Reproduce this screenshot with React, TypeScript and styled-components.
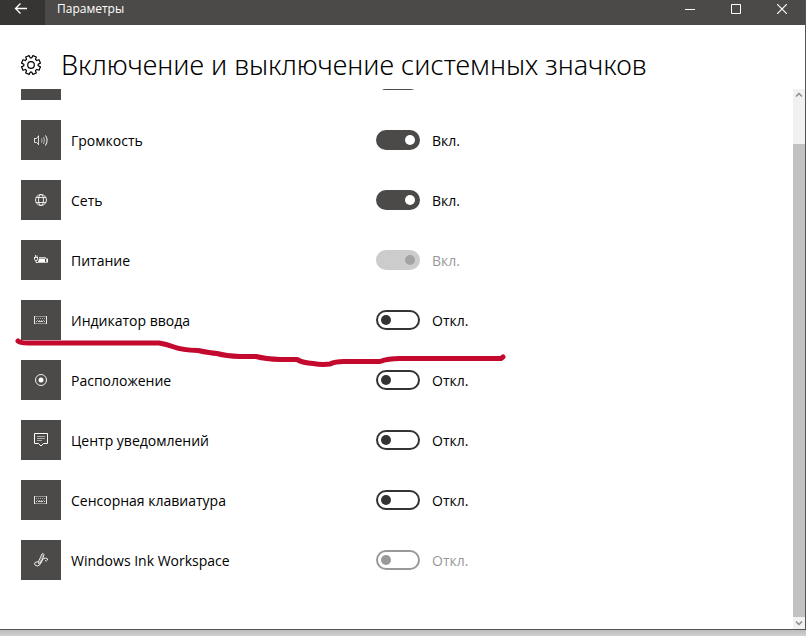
import React, { useState } from "react";
import styled, { createGlobalStyle } from "styled-components";

const GlobalStyle = createGlobalStyle`
  *, *::before, *::after { box-sizing: border-box; }
  body {
    margin: 0;
    background: #c9c9c9;
    color: #000;
    font-family: "Open Sans", "Noto Sans", sans-serif;
    font-size: 14px;
    line-height: 20px;
  }
  button { padding: 0; border: 0; background: none; color: inherit; font: inherit; }
`;

const Desktop = styled.div`
  height: 100vh;
  padding-bottom: 6px;
  background: linear-gradient(to top, #d0d0d0, #bcbcbc 6px);
`;

const Window = styled.div`
  position: relative;
  display: flex;
  flex-direction: column;
  height: 100%;
  border: solid #555453;
  border-width: 0 1px 1px 0;
  background: #fff;
`;

const TitleBar = styled.header`
  display: flex;
  flex: 0 0 25px;
  background: #4c4a48;
  color: #fff;
`;

const BackButton = styled.button`
  display: flex;
  justify-content: center;
  width: 45px;
  padding-right: 4px;
  background: #373533;
`;

const WindowTitle = styled.span`
  flex: 1;
  padding-left: 12px;
  font-size: 12px;
  line-height: 18px;
`;

const CaptionButton = styled.button`
  display: flex;
  justify-content: center;
  width: 46px;
  padding-top: 4px;
`;

const PageHeader = styled.div`
  display: flex;
  flex: 0 0 64px;
  align-items: center;
  gap: 19px;
  padding: 16px 20px 0;

  svg { flex: none; }
`;

const PageTitle = styled.h1`
  margin: 0;
  font-family: "Noto Sans", "Open Sans", sans-serif;
  font-size: 27px;
  font-weight: 300;
  line-height: 32px;
  white-space: nowrap;
`;

const Body = styled.main`
  display: flex;
  flex: 1;
  min-height: 0;
`;

const Viewport = styled.div`
  display: flex;
  flex: 1;
  flex-direction: column;
  justify-content: flex-end;
  min-width: 0;
  overflow: hidden;
  padding-bottom: 39px;
`;

const List = styled.ul`
  flex: none;
  margin: 0;
  padding: 0 0 0 21px;
  list-style: none;
`;

const Row = styled.li`
  display: grid;
  grid-template-columns: 40px 315px 44px 1fr;
  align-items: center;
  height: 60px;
`;

const Tile = styled.span`
  display: grid;
  place-items: center;
  width: 40px;
  height: 40px;
  background: #4c4a48;
  color: #fff;
`;

const Name = styled.label`
  padding: 2px 0 0 10px;
`;

const State = styled.span<{ $muted: boolean }>`
  padding: 2px 0 0 12px;
  color: ${(p) => (p.$muted ? "#999" : "#000")};
`;

const Toggle = styled.input`
  display: flex;
  grid-column: 3;
  align-items: center;
  appearance: none;
  width: 44px;
  height: 20px;
  margin: 0;
  padding: 0 3px;
  border: 2px solid #333;
  border-radius: 10px;

  &::before {
    content: "";
    width: 10px;
    height: 10px;
    border-radius: 50%;
    background: #333;
  }

  &:checked {
    justify-content: flex-end;
    border-color: #4c4a48;
    background: #4c4a48;
  }
  &:checked::before { background: #fff; }

  &:disabled { border-color: #999; }
  &:disabled::before { background: #999; }

  &:disabled:checked { border-color: #ccc; background: #ccc; }
  &:disabled:checked::before { background: #a3a3a3; }
`;

const ScrollBar = styled.div`
  display: flex;
  flex: 0 0 12px;
  flex-direction: column;
  background: #f1f1f1;
`;

const ScrollButton = styled.button`
  display: grid;
  place-items: center;
  width: 12px;
  height: 12px;
`;

const ScrollTrack = styled.div`
  display: flex;
  flex: 1;
  flex-direction: column;
  padding-top: 43px;
`;

const ScrollThumb = styled.div`
  flex: 1;
  background: #c2c2c2;
`;

const InkStroke = styled.svg`
  position: absolute;
  top: 335px;
  left: 10px;
  pointer-events: none;
`;

const iconProps = {
  width: 16,
  height: 16,
  viewBox: "0 0 16 16",
  fill: "none",
  stroke: "currentColor",
  strokeWidth: 1,
  "aria-hidden": true,
} as const;

const ClockIcon = () => (
  <svg {...iconProps}>
    <circle cx="8" cy="8" r="6" />
    <path d="M8 4v4h3" />
  </svg>
);

const VolumeIcon = () => (
  <svg {...iconProps}>
    <path d="M1.500 6v4.500M1.500 6.500h2M1.500 10.500h2M5.500 3.500v9.500M3.500 6.500l2-2.500M3.500 10.500l2 2" strokeOpacity=".8" />
    <path d="M8.500 6.500q1 1.500 0 4M10.500 5q2 3 0 7" strokeOpacity=".65" />
    <path d="M12.500 3.500q3.200 4.500 0 10" />
  </svg>
);

const GlobeIcon = () => (
  <svg {...iconProps} strokeOpacity=".85">
    <circle cx="8" cy="8" r="5.500" />
    <ellipse cx="8" cy="8" rx="2.500" ry="5.500" />
    <path d="M3 5.500h10M3 10.500h10" />
  </svg>
);

const PowerIcon = () => (
  <svg {...iconProps}>
    <path d="M1.500 5v2.500q0 1 1.500 1t1.500-1V5M2.500 3v2M4 3.500v1.500M1 5.500h4M3 8.500v2h2" strokeOpacity=".85" />
    <path d="M6 5.500h6.500v1M5 10.500h8.500v-4h-1" strokeOpacity=".7" />
    <path d="M6 6.500h6v3.500H5z" fill="currentColor" stroke="none" />
    <path d="M14.500 6.500v4" />
  </svg>
);

const KeyboardIcon = () => (
  <svg {...iconProps}>
    <path d="M1.500 4.500h12v7h-12z" strokeOpacity=".4" />
    <path d="M1.500 4v8M13.500 4v8" strokeOpacity=".8" />
    <path d="M3 6.500h1M5 6.500h1M7 6.500h1M9 6.500h1M11 6.500h1M4 8.500h1M6 8.500h1M8 8.500h1M10 8.500h1" strokeOpacity=".5" />
    <path d="M3 9.500h1M5 9.500h5M11 9.500h1" strokeOpacity=".75" />
  </svg>
);

const LocationIcon = () => (
  <svg {...iconProps}>
    <circle cx="8" cy="8" r="5.500" strokeOpacity=".9" />
    <circle cx="8" cy="8" r="2.500" fill="currentColor" stroke="none" />
  </svg>
);

const NotificationIcon = () => (
  <svg {...iconProps}>
    <path d="M5.500 11.500h-4v-10h13v10h-4l-2.500 2.500-2.500-2.500" />
    <path d="M4 4.500h8M4 6.500h8M4 8.500h5" strokeOpacity=".55" />
  </svg>
);

const InkIcon = () => (
  <svg {...iconProps} strokeOpacity=".9">
    <path d="M5.500 11.500L6 8.500l3-6.500q1.500-1 2 .5L8.500 10.500z" />
    <path d="M7 9.500l3-6.500" strokeOpacity=".4" />
    <path d="M5.500 9.500Q1 10 1.500 12q.5 2 3 2 3-.3 3.500-4.500 1-3 4.500-3.500 2.500.2 2 2-.8 1.800-2.500.5" />
  </svg>
);

type Item = {
  id: string;
  name?: string;
  icon: () => React.JSX.Element;
  on: boolean;
  disabled?: boolean;
};

// The first row is scrolled almost out of view, so it carries no caption.
const initialItems: Item[] = [
  { id: "clock", icon: ClockIcon, on: true },
  { id: "volume", name: "Громкость", icon: VolumeIcon, on: true },
  { id: "network", name: "Сеть", icon: GlobeIcon, on: true },
  { id: "power", name: "Питание", icon: PowerIcon, on: true, disabled: true },
  { id: "input", name: "Индикатор ввода", icon: KeyboardIcon, on: false },
  { id: "location", name: "Расположение", icon: LocationIcon, on: false },
  { id: "actions", name: "Центр уведомлений", icon: NotificationIcon, on: false },
  { id: "touch", name: "Сенсорная клавиатура", icon: KeyboardIcon, on: false },
  { id: "ink", name: "Windows Ink Workspace", icon: InkIcon, on: false, disabled: true },
];

// Closed outline of an eight-toothed gear, centred on (11, 11).
const gearPath = (() => {
  const points: string[] = [];
  for (let i = 0; i < 8; i++) {
    const mid = i * 45 + 22.5;
    [
      [-16, 7.2],
      [-11, 9.6],
      [11, 9.6],
      [16, 7.2],
    ].forEach(([offset, radius]) => {
      const a = ((mid + offset) * Math.PI) / 180;
      points.push(`${(11 + radius * Math.cos(a)).toFixed(2)} ${(11 + radius * Math.sin(a)).toFixed(2)}`);
    });
  }
  return `M${points.join("L")}Z`;
})();

export default function App() {
  const [items, setItems] = useState(initialItems);
  const flip = (id: string) =>
    setItems((list) => list.map((it) => (it.id === id ? { ...it, on: !it.on } : it)));

  return (
    <>
      <GlobalStyle />
      <Desktop>
        <Window>
          <TitleBar>
            <BackButton aria-label="Назад">
              <svg width="14" height="18" viewBox="0 0 14 18" fill="none" stroke="#fff" strokeWidth="1.3" aria-hidden>
                <path d="M1.500 8.500H13M6.500 3.500l-5 5 5 5" />
              </svg>
            </BackButton>
            <WindowTitle>Параметры</WindowTitle>
            <CaptionButton aria-label="Свернуть">
              <svg width="10" height="10" stroke="#fff" aria-hidden>
                <path d="M0 5.500h10" />
              </svg>
            </CaptionButton>
            <CaptionButton aria-label="Развернуть">
              <svg width="10" height="10" fill="none" stroke="#fff" aria-hidden>
                <path d="M.5.5h9v9h-9z" />
              </svg>
            </CaptionButton>
            <CaptionButton aria-label="Закрыть">
              <svg width="10" height="10" stroke="#fff" strokeWidth="1.200" aria-hidden>
                <path d="M0 0l10 10M10 0L0 10" />
              </svg>
            </CaptionButton>
          </TitleBar>

          <PageHeader>
            <svg width="22" height="22" viewBox="0 0 22 22" fill="none" stroke="#000" strokeWidth="1.200" strokeLinejoin="round" aria-hidden>
              <path d={gearPath} />
              <circle cx="11" cy="11" r="3.300" />
            </svg>
            <PageTitle>Включение и выключение системных значков</PageTitle>
          </PageHeader>

          <Body>
            <Viewport>
              <List>
                {items.map(({ id, name, icon: Icon, on, disabled }) => (
                  <Row key={id}>
                    <Tile>
                      <Icon />
                    </Tile>
                    {name && <Name htmlFor={id}>{name}</Name>}
                    <Toggle
                      id={id}
                      type="checkbox"
                      role="switch"
                      aria-label={name ? undefined : "Часы"}
                      checked={on}
                      disabled={disabled}
                      onChange={() => flip(id)}
                    />
                    {name && <State $muted={!!disabled}>{on ? "Вкл." : "Откл."}</State>}
                  </Row>
                ))}
              </List>
            </Viewport>
            <ScrollBar>
              <ScrollButton aria-label="Прокрутить вверх">
                <svg width="8" height="6" fill="none" stroke="#8a8a8a" strokeWidth="1.500" aria-hidden>
                  <path d="M1 4.500l3-3 3 3" />
                </svg>
              </ScrollButton>
              <ScrollTrack>
                <ScrollThumb />
              </ScrollTrack>
              <ScrollButton aria-label="Прокрутить вниз">
                <svg width="8" height="6" fill="none" stroke="#8a8a8a" strokeWidth="1.500" aria-hidden>
                  <path d="M1 1.500l3 3 3-3" />
                </svg>
              </ScrollButton>
            </ScrollBar>
          </Body>

          <InkStroke width="500" height="36" viewBox="10 335 500 36" fill="none" stroke="#c4092f" strokeWidth="5" strokeLinecap="round" strokeLinejoin="round" aria-hidden>
            <path d="M18 341Q20 343 28 343H159Q166 344 174 347Q182 350 198 350.500Q210 353 217 353.500Q226 356 240 356.500H256Q266 359 280 359.500H297Q303 363 313 363.500Q322 365 330 364Q336 361 347 361.500H380Q388 358.500 400 358.500H501L503 357" />
          </InkStroke>
        </Window>
      </Desktop>
    </>
  );
}
